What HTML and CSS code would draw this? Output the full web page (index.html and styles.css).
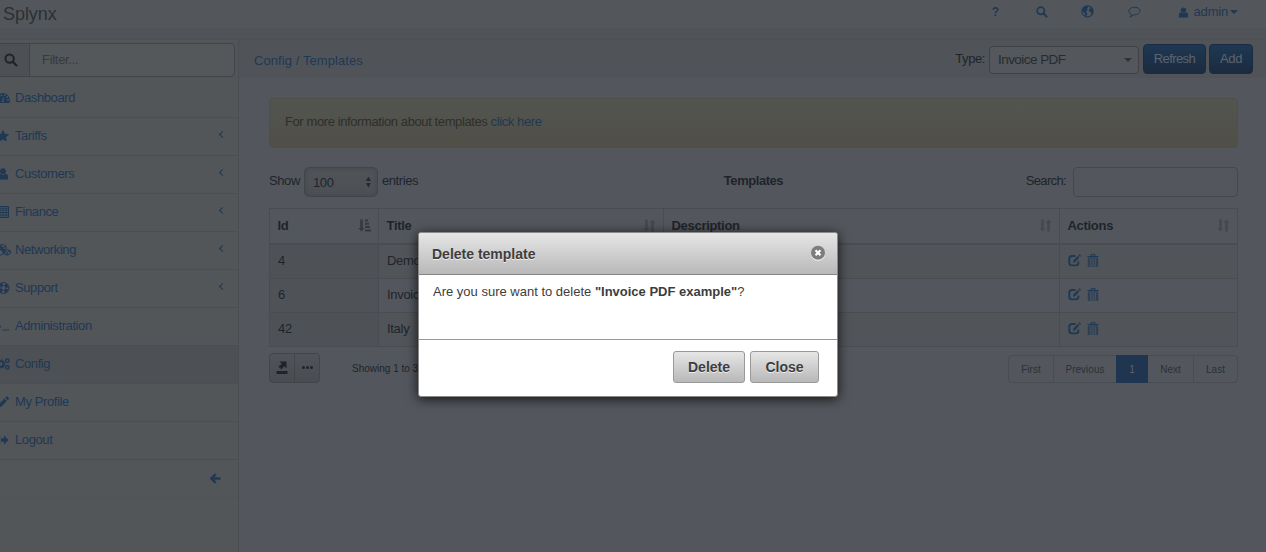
FILE: index.html
```html
<!DOCTYPE html>
<html lang="en">
<head>
<meta charset="utf-8">
<title>Splynx</title>
<link rel="stylesheet" href="styles.css">
</head>
<body>
<svg class="defs" width="0" height="0">
  <symbol id="search" viewBox="0 0 14 14"><circle cx="5.6" cy="5.6" r="4.2" fill="none" stroke="currentColor" stroke-width="2"/><path d="M8.7 8.7 13 13" stroke="currentColor" stroke-width="2.4"/></symbol>
  <symbol id="user" viewBox="0 0 12 12"><circle cx="6" cy="3.4" r="2.9"/><path d="M1 11.5V8.8Q1 6 3.3 5.8Q6 7.8 8.7 5.8Q11 6 11 8.8V11.5Z"/></symbol>
  <symbol id="sort" viewBox="0 0 13 13"><path d="M2.2 0.5h2.6v8.5h1.7L3.5 12.5 .3 9h1.9zM8.2 12.5h2.6V4h1.9L9.5.5 6.5 4h1.7z"/></symbol>
  <symbol id="edit" viewBox="0 0 13 13"><path d="M7.5 2H4Q1.3 2 1.3 4.6V8.8Q1.3 11.4 4 11.4H7.8Q10.4 11.4 10.4 8.8V7.4" fill="none" stroke="currentColor" stroke-width="1.9"/><path d="M5 8.8 5.4 6.4 9.8 2 11.4 3.6 7 8.3ZM10.5 1.3 11.6.3 13 1.7 12 2.9Z"/></symbol>
  <symbol id="trash" viewBox="0 0 12 13"><path d="M.5 2.5h11M4 2.3V.7h4v1.6" fill="none" stroke="currentColor"/><path d="M1.3 4h9.4v9H1.3zM2.7 5v7M4.9 5v7M7.1 5v7M9.3 5v7" fill="none" stroke="currentColor" stroke-width=".9"/></symbol>
</svg>
<header class="topbar">
  <div class="brand">Splynx</div>
  <nav class="topnav">
    <span class="help">?</span>
    <svg class="t-search" width="12" height="12"><use href="#search"/></svg>
    <svg class="t-globe" width="13" height="13" viewBox="0 0 13 13"><circle cx="6.5" cy="6.5" r="5.6" fill="none" stroke="currentColor" stroke-width="1.1"/><path d="M1.2 4 3.4 1.3 6 .9 7.3 2.4 5.9 3.7 6.6 5 4.7 6.7 6.4 8.2 5.3 11.5 4.3 11.3 4 8.4 1.5 6.3ZM8.4 1.1 11.5 3.6 12 7 10.6 9.6 9.5 6.9 7.8 6.2 8 4.2 9.5 3.3Z"/></svg>
    <svg class="t-chat" width="13" height="12" viewBox="0 0 13 12"><path d="M3.4 8.5C-.7 6.4.3 1.4 6.6 1.2C14.2 1.4 13.6 8.8 6 8.8L1.9 11Q3.5 9.8 3.4 8.5Z" fill="none" stroke="currentColor"/></svg>
    <svg class="t-user" width="11" height="11"><use href="#user"/></svg>
    <span class="admin">admin</span><i class="caret"></i>
  </nav>
</header>
<div class="body">
  <aside class="sidebar">
    <div class="filter"><span class="filter-icon"><svg width="14" height="14"><use href="#search"/></svg></span><span class="filter-input">Filter...</span></div>
    <ul class="menu">
      <li><svg viewBox="0 0 14 12"><path d="M.3 11Q-.8 5.4 3 2.4Q7-.4 11 2.4Q14.8 5.4 13.7 11Z"/><g class="cut"><circle cx="5.4" cy="3.4" r=".9"/><circle cx="8.8" cy="3" r=".9"/><circle cx="11.2" cy="5" r=".9"/><circle cx="12" cy="8" r=".9"/><circle cx="3" cy="6" r=".9"/><path d="M8.1 4.4 7.5 10H5.6L6.7 7Z"/></g></svg><span>Dashboard</span></li>
      <li><svg viewBox="0 0 14 12"><path d="M7 0 8.9 3.8 13.2 4.3 10 7.3 10.8 11.5 7 9.5 3.2 11.5 4 7.3.8 4.3 5.1 3.8Z"/></svg><span>Tariffs</span><b class="chev"></b></li>
      <li><svg viewBox="0 0 14 12"><g transform="translate(1)"><circle cx="6" cy="3.2" r="2.9"/><path d="M1 11.5V8.8Q1 6 3.3 5.8Q6 7.8 8.7 5.8Q11 6 11 8.8V11.5Z"/></g></svg><span>Customers</span><b class="chev"></b></li>
      <li><svg viewBox="0 0 14 12"><path d="M1 .5h11.5v11H1zM1 2.2h11.5M1 4h11.5M1 6.5h11.5M1 9h11.5M4 4v8M7 4v8M10 4v8" class="line"/></svg><span>Finance</span><b class="chev"></b></li>
      <li><svg viewBox="0 0 15 12"><path d="M4 1 7.4.5 10 2v3L7.2 6.1 4 5zM4 2.4l3.2 1.1L10 2.2M7.2 3.5v2.6M1 6.5 4 5.5 7 7v3L4 11.4 1 10zM8 6.7l3-1.2 3.3 1.2v3L11 11.2 8 9.8zM8 7l3.2 1.3 3-1.3M11.2 8.3v2.9" class="line"/><path d="M4 1.4 9 10" class="line thick"/></svg><span>Networking</span><b class="chev"></b></li>
      <li><svg viewBox="0 0 14 12"><circle cx="7.5" cy="6" r="5.5" class="line"/><circle cx="7.5" cy="6" r="3.7" fill="none" stroke="currentColor" stroke-width="3" stroke-dasharray="3.4 2.41" stroke-dashoffset="-1.2"/><circle cx="7.5" cy="6" r="2.4" class="line"/></svg><span>Support</span><b class="chev"></b></li>
      <li><svg viewBox="0 0 14 12"><path d="M2 3.8 5 6.5 2 9.3M6.5 10h6.5" class="line"/></svg><span>Administration</span></li>
      <li class="active"><svg viewBox="0 0 14 12"><circle cx="4.7" cy="6" r="2.8" fill="none" stroke="currentColor" stroke-width="2"/><circle cx="4.7" cy="6" r="4.1" fill="none" stroke="currentColor" stroke-width="1.2" stroke-dasharray="1.6 1.62"/><circle cx="11.3" cy="2.7" r="1.7" class="line thick"/><circle cx="11.3" cy="9.4" r="1.7" class="line thick"/></svg><span>Config</span></li>
      <li><svg viewBox="0 0 14 12"><path d="M2 11.5 2.8 8.2 8.4 2.6 10.9 5 5.2 10.7ZM9.2 1.8 10.4.7Q11 .3 11.6.8L12.8 2Q13.2 2.6 12.8 3.1L11.7 4.3Z"/></svg><span>My Profile</span></li>
      <li><svg viewBox="0 0 14 12"><path d="M4.4 2H3Q1.6 2 1.6 3.4V8.6Q1.6 10 3 10H4.4" class="line"/><path d="M4.8 4.3H8V1.5L12.6 6 8 10.5V7.7H4.8Z"/></svg><span>Logout</span></li>
      <li class="collapse"><svg viewBox="0 0 11 11"><path d="M5.8 1 1.4 5.5 5.8 10M2 5.5h8.5" fill="none" stroke="currentColor" stroke-width="2.3"/></svg></li>
    </ul>
  </aside>
  <main class="main">
    <div class="crumbs"><span class="crumb">Config / Templates</span>
      <div class="tools"><span class="type">Type:</span><span class="select">Invoice PDF<i class="caret"></i></span><span class="btn refresh">Refresh</span><span class="btn add">Add</span></div>
    </div>
    <section class="content">
      <div class="alert">For more information about templates <a>click here</a></div>
      <div class="controls">
        <div class="length"><span>Show</span><span class="count">100<i class="updown"></i></span><span>entries</span></div>
        <strong>Templates</strong>
        <div class="searchbox"><span>Search:</span><span class="input"></span></div>
      </div>
      <div class="table">
        <div class="row head"><div>Id<svg class="asc" viewBox="0 0 13 13" width="13" height="13"><path d="M2.2.5h2.6v8.5h1.7L3.5 12.5.3 9h1.9zM7 .5h3v2H7zM7 3.8h4v2H7zM7 7.1h5v2H7zM7 10.4h6v2H7z"/></svg></div><div>Title<svg width="13" height="13"><use href="#sort"/></svg></div><div>Description<svg width="13" height="13"><use href="#sort"/></svg></div><div>Actions<svg width="13" height="13"><use href="#sort"/></svg></div></div>
        <div class="row odd"><div>4</div><div>Demo</div><div></div><div class="acts"><svg width="13" height="13"><use href="#edit"/></svg><svg width="12" height="13"><use href="#trash"/></svg></div></div>
        <div class="row"><div>6</div><div>Invoic</div><div></div><div class="acts"><svg width="13" height="13"><use href="#edit"/></svg><svg width="12" height="13"><use href="#trash"/></svg></div></div>
        <div class="row odd"><div>42</div><div>Italy</div><div></div><div class="acts"><svg width="13" height="13"><use href="#edit"/></svg><svg width="12" height="13"><use href="#trash"/></svg></div></div>
      </div>
      <div class="foot">
        <div class="group"><span><svg width="12" height="13" viewBox="0 0 12 13"><path d="M.5 10h11v3H.5zM3.5.5h7v7L8.3 5.3 5.5 8.3 4.6 7.9 4.3 6.5 2.6 6.7 3.2 4.7 6 3z"/></svg></span><span class="dots"><i></i><i></i><i></i></span></div>
        <span class="info">Showing 1 to 3</span>
        <div class="pages"><span>First</span><span>Previous</span><span class="on">1</span><span>Next</span><span>Last</span></div>
      </div>
    </section>
  </main>
</div>
<div class="dialog" role="dialog">
  <div class="d-head"><span>Delete template</span><svg width="16" height="16" viewBox="0 0 16 16"><circle cx="8" cy="8.6" r="7.2" fill="#f4f4f4"/><circle cx="8" cy="7.8" r="7" fill="#7d7d7d"/><path d="M5.5 5.3 10.5 10.3M10.5 5.3 5.5 10.3" stroke="#fff" stroke-width="2.1"/></svg></div>
  <div class="d-body">Are you sure want to delete <b>"Invoice PDF example"</b>?</div>
  <div class="d-foot"><button class="del">Delete</button><button class="close">Close</button></div>
</div>
</body>
</html>
```
FILE: styles.css
```css
* { box-sizing: border-box; }
body { margin: 0; width: 1266px; height: 552px; overflow: hidden; position: relative; background: #53575d; color: #20242a; font: 13px/20px "Liberation Sans", Arial, sans-serif; letter-spacing: -0.4px; }
.defs { position: absolute; }
svg { fill: currentColor; flex: none; display: block; }
.topbar { height: 40px; background: linear-gradient(#53575b 0 28px, #505458 28px); border-bottom: 1px solid #4d5155; display: flex; justify-content: space-between; }
.brand { font-size: 18px; line-height: 28px; letter-spacing: -0.05px; padding-left: 3px; color: #2c3034; }
.topnav { display: flex; height: 24px; align-items: center; color: #1f3854; padding-right: 28px; }
.help { font-weight: bold; font-size: 12px; margin-right: 37px; }
.t-search { margin-right: 33px; }
.t-globe { margin-right: 34px; margin-top: -2px; }
.t-chat { margin-right: 37px; }
.t-user { margin-right: 5px; }
.admin { letter-spacing: -0.2px; }
.caret { width: 0; height: 0; border: 4px solid transparent; border-top-color: currentColor; border-bottom: 0; margin-left: 2px; }
.body { display: flex; height: 512px; }
.sidebar { width: 239px; border-right: 1px solid #4a4e53; background: #525659; flex: none; }
.filter { display: flex; height: 40px; padding: 3px 3px 3px 0; }
.filter-icon { width: 29px; display: flex; align-items: center; padding-left: 4px; background: #4d5155; border: solid #414549; border-width: 1px 0; color: #202428; }
.filter-input { flex: 1; border: 1px solid #414549; border-radius: 0 4px 4px 0; padding-left: 12px; line-height: 32px; color: #373b40; font-size: 13px; letter-spacing: -0.3px; background: #54585b; }
.menu { list-style: none; margin: 0; padding: 0; color: #1f3854; }
.menu li { height: 38px; border-bottom: 1px solid #4b4f53; display: flex; align-items: center; padding-bottom: 2px; }
.menu li:not(.collapse) > svg { width: 14px; height: 12px; margin: 1px 5px 0 -4px; }
.menu li:nth-child(5) > svg { width: 15px; margin-right: 4px; }
.menu .active { background: #4d5155; }
.menu .collapse { border-bottom-color: #4f5357; }
.menu .collapse > svg { width: 11px; height: 11px; margin: 1px 0 0 210px; }
.cut { color: #525659; }
.line { fill: none; stroke: currentColor; }
.thick { stroke-width: 1.4; }
.chev { width: 5px; height: 5px; border: solid #1f3854; border-width: 0 0 1.2px 1.2px; transform: rotate(45deg); margin: -3px 13px 0 auto; }
.main { flex: 1; }
.crumbs { height: 38px; background: #505459; display: flex; justify-content: space-between; padding: 0 13px 0 15px; align-items: center; color: #1f3854; }
.crumb { padding-top: 3px; letter-spacing: 0.08px; }
.tools { display: flex; align-items: center; }
.type { color: #20242a; margin: -1px 4px 0 0; }
.select { width: 150px; height: 28px; margin: 1px 4px 0 0; border: 1px solid #3e4247; border-radius: 4px; background: #54585c; color: #272b30; display: flex; align-items: center; justify-content: space-between; padding: 0 6px 0 8px; letter-spacing: -0.55px; font-size: 13.5px; }
.select .caret { color: #303439; }
.btn { height: 30px; line-height: 28px; border: 1px solid #1a2c42; border-radius: 4px; background: linear-gradient(#1f3853, #1b2b3f); color: #5c6570; text-align: center; }
.refresh { width: 63px; margin-right: 3px; letter-spacing: -0.6px; }
.add { width: 44px; }
.content { padding: 20px 28px 0 30px; }
.alert { height: 50px; border: 1px solid #504f46; border-radius: 4px; background: linear-gradient(#52554f, #504f48); padding: 13px 15px; color: #302e2b; }
.alert a { color: #1f3854; }
.controls { height: 30px; margin: 19px 0 11px; display: grid; grid-template-columns: 1fr auto 1fr; align-items: center; }
.length { display: flex; align-items: center; gap: 4px; }
.controls > strong, .length > span:not(.count), .searchbox > span:first-child { margin-top: -2px; }
.count { width: 74px; height: 30px; line-height: 29px; border: 1px solid #42464b; border-radius: 5px; background: linear-gradient(#505459, #4c5055); box-shadow: inset 0 0 4px #42464b; padding: 0 6px 0 8px; display: flex; justify-content: space-between; align-items: center; letter-spacing: -.3px; }
.updown { width: 5px; height: 11px; background: #272b30; clip-path: polygon(50% 0, 100% 40%, 0 40%, 0 60%, 100% 60%, 50% 100%, 0 60%, 0 40%); }
.controls strong { letter-spacing: -0.45px; }
.searchbox { display: flex; justify-content: flex-end; align-items: center; gap: 7px; }
.searchbox > span:first-child { letter-spacing: -0.65px; }
.input { width: 165px; height: 30px; border: 1px solid #44484d; border-radius: 4px; }
.table { border: 1px solid #494d52; border-bottom: 0; }
.row { display: grid; grid-template-columns: 109px 285px 396px 1fr; height: 34px; border-bottom: 1px solid #494d52; }
.row > div { border-right: 1px solid #494d52; padding: 0 8px 2px; display: flex; align-items: center; letter-spacing: -0.3px; }
.row > div:last-child { border-right: 0; }
.row > div:first-child { background: #4f5358; }
.row.head { height: 36px; border-bottom-width: 2px; font-weight: bold; }
.row.head > div { justify-content: space-between; background: none; padding: 0 7.5px; }
.head svg { color: #45494e; margin-top: -1px; }
.head .asc { color: #363a3f; }
.odd { background: #515559; }
.row.odd > div:first-child { background: #4e5257; }
.row .acts { gap: 6px; color: #1f3854; }
.foot { display: flex; margin-top: 6px; height: 30px; align-items: flex-start; font-size: 10px; letter-spacing: 0; }
.group { display: flex; width: 51px; height: 30px; border: 1px solid #42464b; border-radius: 4px; background: linear-gradient(#505459, #494d52); }
.group > span { flex: 1; display: flex; align-items: center; justify-content: center; padding-bottom: 2px; }
.dots { border-left: 1px solid #42464b; gap: 1px; }
.dots i { width: 3px; height: 3px; border-radius: 50%; background: #20242a; }
.info { margin: 6px 0 0 32px; }
.pages { display: flex; height: 28px; width: 230px; margin: 2px 0 0 auto; border: 1px solid #494d52; border-radius: 4px; color: #2c3035; line-height: 27px; text-align: center; }
.pages span { border-right: 1px solid #494d52; width: 45px; }
.pages span:nth-child(2) { width: 62px; border: 0; }
.pages .on { width: 32px; border: 0; margin: -1px 0; line-height: 29px; background: #1f3550; color: #596472; }
.pages span:nth-child(4) { width: 46px; }
.pages span:last-child { border: 0; width: 43px; }
.dialog { position: absolute; left: 418px; top: 232px; width: 420px; height: 165px; border: 1px solid #8a8a8a; border-radius: 3px; background: #fff; color: #3d3d3d; box-shadow: 0 2px 12px rgba(0,0,0,.8); letter-spacing: 0; display: flex; flex-direction: column; }
.d-head { height: 42px; border-bottom: 1px solid #848484; border-radius: 2px 2px 0 0; background: linear-gradient(#e6e6e6, #b8b8b8); display: flex; justify-content: space-between; align-items: center; padding: 0 11px 0 13px; font-weight: bold; font-size: 14px; text-shadow: 0 1px 0 #eee; }
.d-head svg { margin-top: -1px; }
.d-body { height: 65px; border-bottom: 1px solid #999; padding: 7px 14px; }
.d-foot { display: flex; justify-content: flex-end; gap: 5px; padding: 11px 18px 0 0; }
.d-foot button { height: 32px; border: 1px solid #999; border-radius: 3px; background: linear-gradient(#e6e6e6, #b8b8b8); color: #3d3d3d; font: bold 14px "Liberation Sans", Arial, sans-serif; text-shadow: 0 1px 0 #eee; padding: 0; }
.del { width: 72px; }
.close { width: 69px; }
```
